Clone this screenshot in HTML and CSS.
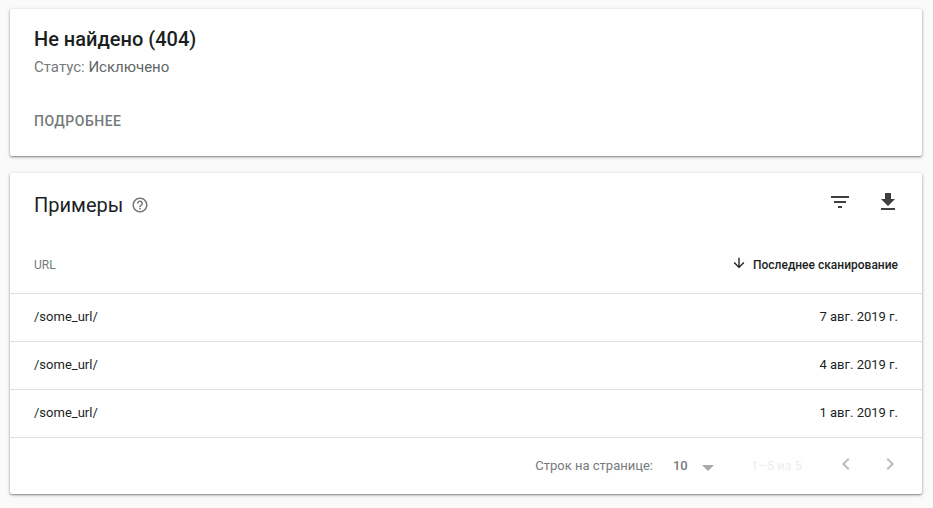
FILE: index.html
```html
<!DOCTYPE html>
<html lang="ru">
<head>
<meta charset="utf-8">
<meta name="viewport" content="width=device-width, initial-scale=1">
<title>Не найдено (404)</title>
<link rel="stylesheet" href="styles.css">
</head>
<body>
<main class="page">
  <section class="card summary">
    <h1 class="summary-title">Не найдено (404)</h1>
    <p class="summary-status">Статус: <span class="status-value">Исключено</span></p>
    <button class="more" type="button">ПОДРОБНЕЕ</button>
  </section>

  <section class="card">
    <header class="toolbar">
      <h2 class="toolbar-title">Примеры</h2>
      <button class="icon-button help" type="button" aria-label="Справка">
        <svg width="18" height="18" viewBox="0 0 24 24"><path d="M11 18h2v-2h-2v2zm1-16C6.480 2 2 6.480 2 12s4.480 10 10 10 10-4.480 10-10S17.520 2 12 2zm0 18c-4.410 0-8-3.590-8-8s3.590-8 8-8 8 3.590 8 8-3.590 8-8 8zm0-14c-2.210 0-4 1.790-4 4h2c0-1.100.900-2 2-2s2 .900 2 2c0 2-3 1.750-3 5h2c0-2.250 3-2.500 3-5 0-2.210-1.790-4-4-4z"/></svg>
      </button>
      <div class="actions">
        <button class="icon-button" type="button" aria-label="Фильтр">
          <svg width="24" height="24" viewBox="0 0 24 24"><path d="M10 18h4v-2h-4v2zM3 6v2h18V6H3zm3 7h12v-2H6v2z"/></svg>
        </button>
        <button class="icon-button" type="button" aria-label="Скачать">
          <svg width="24" height="24" viewBox="0 0 24 24"><path d="M19 9h-4V3H9v6H5l7 7 7-7zM5 18v2h14v-2H5z"/></svg>
        </button>
      </div>
    </header>

    <table class="examples">
      <thead>
        <tr>
          <th scope="col">URL</th>
          <th scope="col" class="date sorted" aria-sort="descending">
            <button class="sort" type="button">
              <svg width="16" height="16" viewBox="0 0 24 24"><path d="M20 12l-1.410-1.410L13 16.170V4h-2v12.170l-5.580-5.590L4 12l8 8 8-8z"/></svg>
              Последнее сканирование
            </button>
          </th>
        </tr>
      </thead>
      <tbody>
        <tr><td>/some_url/</td><td class="date">7 авг. 2019 г.</td></tr>
        <tr><td>/some_url/</td><td class="date">4 авг. 2019 г.</td></tr>
        <tr><td>/some_url/</td><td class="date">1 авг. 2019 г.</td></tr>
      </tbody>
    </table>

    <footer class="pager">
      <label for="rows">Строк на странице:</label>
      <div class="rows-field">
        <select id="rows" class="rows-select">
          <option selected>10</option>
          <option>25</option>
          <option>50</option>
        </select>
        <svg class="caret" width="12" height="6" viewBox="0 0 12 6"><path d="M0 0h12L6 6z"/></svg>
      </div>
      <span class="range">1–5 из 5</span>
      <div class="pager-nav">
        <button class="icon-button nav" type="button" aria-label="Назад">
          <svg width="24" height="24" viewBox="0 0 24 24"><path d="M15.410 7.410L14 6l-6 6 6 6 1.410-1.410L10.830 12z"/></svg>
        </button>
        <button class="icon-button nav" type="button" aria-label="Вперёд">
          <svg width="24" height="24" viewBox="0 0 24 24"><path d="M10 6L8.590 7.410 13.170 12l-4.580 4.590L10 18l6-6z"/></svg>
        </button>
      </div>
    </footer>
  </section>
</main>
</body>
</html>
```
FILE: styles.css
```css
* {
  box-sizing: border-box;
}

body {
  margin: 0;
  background: #fafafa;
  color: #1b1f1f;
  font-family: Roboto, "Liberation Sans", sans-serif;
  font-size: 13px;
  line-height: 20px;
}

button,
select {
  margin: 0;
  padding: 0;
  border: 0;
  background: none;
  color: inherit;
  font: inherit;
}

button {
  cursor: pointer;
}

svg {
  display: block;
  flex: none;
  fill: currentColor;
}

.page {
  display: flex;
  flex-direction: column;
  gap: 17px;
  padding: 9px 11px 14px 10px;
}

.card {
  background: #fff;
  border-radius: 2px;
  box-shadow: 0 1px 2px rgba(0, 0, 0, 0.4), 0 1px 4px rgba(0, 0, 0, 0.16);
}

.summary {
  padding: 16px 24px 23px;
}

.summary-title {
  margin: 0;
  font-size: 20px;
  font-weight: 500;
  line-height: 28px;
}

.summary-status {
  margin: 4px 0 32px;
  color: #757a7a;
  font-size: 15px;
}

.status-value {
  color: #616666;
}

.more {
  display: block;
  color: #757a7a;
  font-size: 14px;
  font-weight: 500;
  line-height: 24px;
  letter-spacing: 0.5px;
}

.toolbar {
  display: flex;
  align-items: center;
  gap: 8px;
  padding: 16px 22px 0 24px;
}

.toolbar-title {
  margin: 0;
  font-size: 20px;
  font-weight: 400;
  line-height: 32px;
}

.icon-button {
  color: #3c4040;
}

.help {
  color: #757575;
}

.actions {
  display: flex;
  gap: 24px;
  margin: 0 0 6px auto;
}

.examples {
  width: 100%;
  border-collapse: collapse;
}

.examples th,
.examples td {
  height: 48px;
  padding: 0 24px;
  border-bottom: 1px solid #e0e0e0;
  text-align: left;
}

.examples th {
  height: 72px;
  padding-top: 16px;
  color: #757a7a;
  font-size: 12px;
  font-weight: 400;
}

.examples .date {
  text-align: right;
}

.examples .sorted {
  color: #1b1f1f;
}

.sort {
  display: flex;
  align-items: flex-start;
  gap: 6px;
  margin-left: auto;
  font-weight: 500;
}

.pager {
  display: flex;
  align-items: center;
  justify-content: flex-end;
  padding: 14px 20px;
  color: #757a7a;
}

.rows-field {
  display: flex;
  align-items: center;
  gap: 14px;
  margin: 0 37px 0 20px;
}

.rows-select {
  appearance: none;
  font-weight: 500;
}

.caret {
  margin-top: 4px;
  color: #a8a8a8;
}

.range {
  color: #eeeeee;
}

.pager-nav {
  display: flex;
  gap: 20px;
  margin: 0 0 4px 32px;
}

.nav {
  color: #bdbdbd;
}
```
